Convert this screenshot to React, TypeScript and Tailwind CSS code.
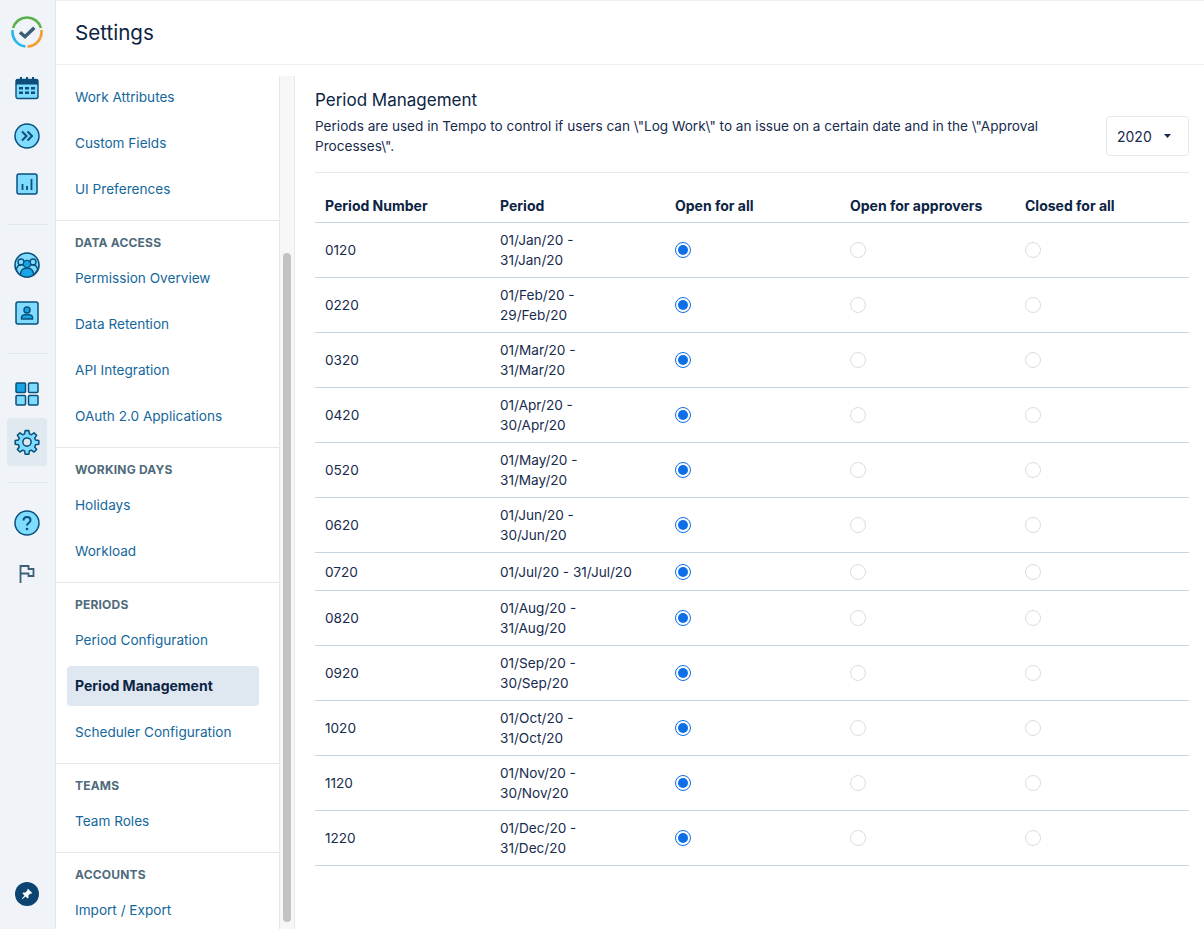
import React from "react";

const Logo = () => (
  <svg width="32" height="32" viewBox="0 0 32 32" fill="none">
    <path d="M2.06 12A14.5 14.5 0 0 1 29.94 12" stroke="#5cb04a" strokeWidth="2.6" />
    <path d="M1.64 14A14.5 14.5 0 0 0 14.5 30.42" stroke="#29b6e8" strokeWidth="2.6" />
    <path d="M16.5 30.49A14.500 14.500 0 0 0 30.36 14" stroke="#f59a2f" strokeWidth="2.6" />
    <path d="M9 16.3l5 4.400 9.300-9" stroke="#3d5d75" strokeWidth="3.5" />
  </svg>
);

const S = "#0b4f7a";
const F = "#7fdcff";

const Calendar = () => (
  <svg width="24" height="24" viewBox="0 0 24 24">
    <rect x="1" y="3.5" width="22" height="19" rx="2" fill={F} stroke={S} strokeWidth="1.4" />
    <path d="M1 3.5h22v5H1z" fill={S} />
    <path d="M6 1v4M12 1v4M18 1v4" stroke={S} strokeWidth="2" />
    <path d="M4 11h4v2.5H4zM10 11h4v2.5h-4zM16 11h4v2.5h-4zM4 15.5h4V18H4zM10 15.5h4V18h-4zM16 15.5h4V18h-4z" fill={S} />
  </svg>
);
const Forward = () => (
  <svg width="26" height="26" viewBox="0 0 26 26" fill="none">
    <circle cx="13" cy="13" r="12" fill={F} stroke={S} strokeWidth="1.5" />
    <path d="M8 8.500l4.500 4.500L8 17.500M13.500 8.500L18 13l-4.500 4.500" stroke={S} strokeWidth="2" />
  </svg>
);
const Chart = () => (
  <svg width="22" height="22" viewBox="0 0 22 22" fill="none">
    <rect x="1" y="1" width="20" height="20" rx="2" fill={F} stroke={S} strokeWidth="1.5" />
    <path d="M6.500 11v6M11 13v4M15.500 6v11" stroke={S} strokeWidth="1.800" />
  </svg>
);
const Team = () => (
  <svg width="26" height="26" viewBox="0 0 26 26">
    <circle cx="13" cy="13" r="12" fill={F} stroke={S} strokeWidth="1.600" />
    <circle cx="7" cy="10" r="3" fill="none" stroke={S} strokeWidth="1.400" />
    <circle cx="19" cy="10" r="3" fill="none" stroke={S} strokeWidth="1.400" />
    <path d="M2.500 18c0-3.500 2-5 5-5h11c3 0 5 1.500 5 5l-3 4H5z" fill={F} stroke={S} strokeWidth="1.300" />
    <circle cx="13" cy="12" r="3.600" fill="#16a5e6" stroke={S} strokeWidth="1.300" />
    <path d="M6.500 23c0-5 2.500-7 6.500-7s6.500 2 6.500 7a12 12 0 0 1-13 0z" fill="#16a5e6" stroke={S} strokeWidth="1.300" />
  </svg>
);
const Person = () => (
  <svg width="24" height="24" viewBox="0 0 24 24">
    <rect x="1" y="1" width="22" height="22" rx="2" fill={F} stroke={S} strokeWidth="1.500" />
    <circle cx="12" cy="9" r="3" fill="#16a5e6" stroke={S} strokeWidth="1.500" />
    <path d="M6.500 18v-1.500c0-2 2-3 5.500-3s5.500 1 5.500 3V18z" fill="#16a5e6" stroke={S} strokeWidth="1.500" />
  </svg>
);
const Grid = () => (
  <svg width="24" height="24" viewBox="0 0 24 24" stroke={S} strokeWidth="1.500">
    <rect x="1" y="1" width="9.500" height="9.500" rx="1" fill="#16a5e6" />
    <rect x="13.500" y="1" width="9.500" height="9.500" rx="1" fill={F} />
    <rect x="1" y="13.500" width="9.500" height="9.500" rx="1" fill={F} />
    <rect x="13.500" y="13.500" width="9.500" height="9.500" rx="1" fill={F} />
  </svg>
);
const Gear = () => (
  <svg width="26" height="26" viewBox="0 0 24 24" fill={F} stroke={S} strokeWidth="1.400" strokeLinejoin="round">
    <path d="M10.300 1.500h3.400l.5 3 1.800.8 2.500-1.800 2.400 2.400-1.800 2.500.8 1.800 3 .5v3.400l-3 .5-.8 1.800 1.800 2.500-2.400 2.400-2.500-1.800-1.800.8-.5 3h-3.400l-.5-3-1.800-.8-2.500 1.800-2.400-2.400 1.800-2.500-.8-1.800-3-.5v-3.400l3-.5.8-1.800-1.800-2.500 2.400-2.400 2.500 1.800 1.800-.8z" />
    <circle cx="12" cy="12" r="3.800" fill="#e1e9f0" />
  </svg>
);
const Help = () => (
  <svg width="26" height="26" viewBox="0 0 26 26" fill="none">
    <circle cx="13" cy="13" r="12" fill={F} stroke={S} strokeWidth="1.500" />
    <path d="M9.500 10.500c0-2.300 1.500-3.500 3.500-3.500s3.500 1.200 3.500 3.200c0 2.800-3.500 2.800-3.500 5.300" stroke={S} strokeWidth="2" />
    <circle cx="13" cy="19" r="1.300" fill={S} />
  </svg>
);
const Flag = () => (
  <svg width="16" height="18" viewBox="0 0 16 18" fill="none" stroke="#3d6076" strokeWidth="1.800">
    <path d="M1.500 18V1h8v3h5v7h-5V8.500H1.500" />
  </svg>
);
const Pin = () => (
  <div className="flex h-6 w-6 items-center justify-center rounded-full bg-[#0b4470]">
    <svg width="12" height="12" viewBox="0 0 12 12" fill="#fff">
      <path d="M7 .8l4.200 4.200-1 .8-.8-.2-2 2 .2 2-1 .9-2-2L1.200 11.200.8 10.800l2.700-3.400-2-2 .9-1 2 .2 2-2-.2-.8z" />
    </svg>
  </div>
);

const Rule = () => <div className="mx-[7px] h-px bg-[#dfe6ee]" />;

const Rail = () => (
  <div className="flex w-[56px] shrink-0 flex-col border-r border-[#e1e7ee] bg-[#f0f4f8] pr-[1px]">
    <div className="flex h-[64px] items-center justify-center"><Logo /></div>
    <div className="flex h-[48px] items-center justify-center"><Calendar /></div>
    <div className="flex h-[48px] items-center justify-center"><Forward /></div>
    <div className="mb-[16px] flex h-[48px] items-center justify-center"><Chart /></div>
    <Rule />
    <div className="mt-[16px] flex h-[48px] items-center justify-center"><Team /></div>
    <div className="mb-[16px] flex h-[48px] items-center justify-center"><Person /></div>
    <Rule />
    <div className="mt-[16px] flex h-[48px] items-center justify-center"><Grid /></div>
    <div className="mx-[7px] flex h-[48px] items-center justify-center rounded bg-[#e1e9f0]"><Gear /></div>
    <div className="mt-[16px]"><Rule /></div>
    <div className="mt-[16px] flex h-[48px] items-center justify-center"><Help /></div>
    <div className="flex h-[48px] items-center justify-center pt-[6px]"><Flag /></div>
    <div className="mt-auto flex h-[48px] items-start justify-center pt-px"><Pin /></div>
  </div>
);

const groups: { title?: string; items: string[] }[] = [
  { items: ["Work Attributes", "Custom Fields", "UI Preferences"] },
  { title: "DATA ACCESS", items: ["Permission Overview", "Data Retention", "API Integration", "OAuth 2.0 Applications"] },
  { title: "WORKING DAYS", items: ["Holidays", "Workload"] },
  { title: "PERIODS", items: ["Period Configuration", "Period Management", "Scheduler Configuration"] },
  { title: "TEAMS", items: ["Team Roles"] },
  { title: "ACCOUNTS", items: ["Import / Export"] },
];

const Nav = () => (
  <div className="h-full w-[223px] shrink-0 overflow-hidden pt-[12px]">
    {groups.map((g, i) => (
      <div key={i} className={i === groups.length - 1 ? "" : "border-b border-[#e3e8ed] pb-[5px]"}>
        {g.title && (
          <div className="h-[37px] pl-[19px] pt-[14px] text-[12px] font-bold leading-[16px] tracking-[0.2px] text-[#4f6b7c]">
            {g.title}
          </div>
        )}
        {g.items.map((it) =>
          it === "Period Management" ? (
            <div key={it} className="mx-[11px] mb-[6px] flex h-[40px] w-[192px] items-center rounded bg-[#dfe8f0] pb-[2px] pl-[8px] text-[14px] font-bold text-[#0c2444]">
              {it}
            </div>
          ) : (
            <div key={it} className="mb-[6px] flex h-[40px] items-center pl-[19px] text-[13.6px] text-[#15679b]">
              {it}
            </div>
          ),
        )}
      </div>
    ))}
  </div>
);

const Scroll = () => (
  <div className="flex h-full w-[16px] shrink-0 justify-center border-x border-[#e6e9ec] bg-[#f7f7f7] pt-[177px]">
    <div className="h-[669px] w-[8px] rounded-full bg-[#c2c2c2]" />
  </div>
);

const rows = [
  ["0120", "01/Jan/20 - 31/Jan/20"],
  ["0220", "01/Feb/20 - 29/Feb/20"],
  ["0320", "01/Mar/20 - 31/Mar/20"],
  ["0420", "01/Apr/20 - 30/Apr/20"],
  ["0520", "01/May/20 - 31/May/20"],
  ["0620", "01/Jun/20 - 30/Jun/20"],
  ["0720", "01/Jul/20 - 31/Jul/20"],
  ["0820", "01/Aug/20 - 31/Aug/20"],
  ["0920", "01/Sep/20 - 30/Sep/20"],
  ["1020", "01/Oct/20 - 31/Oct/20"],
  ["1120", "01/Nov/20 - 30/Nov/20"],
  ["1220", "01/Dec/20 - 31/Dec/20"],
];

const RadioOn = () => (
  <div className="flex h-4 w-4 items-center justify-center rounded-full border border-[#0d6fe8] bg-white">
    <div className="h-[10px] w-[10px] rounded-full bg-[#0d6fe8]" />
  </div>
);
const RadioOff = () => <div className="h-4 w-4 rounded-full border border-[#d9dde1] bg-white" />;

const cols = "grid grid-cols-[175px_175px_175px_175px_1fr] items-center";

const Main = () => (
  <div className="min-w-0 flex-1 overflow-hidden pl-[20px] pr-[15px]">
    <div className="flex h-[108px] items-start border-b border-[#e3e8ed] pt-[24px]">
      <div className="min-w-0 flex-1">
        <h2 className="text-[17px] leading-[22px] text-[#0c2444]">Period Management</h2>
        <p className="mt-[5px] w-[760px] text-[13.6px] leading-[20px] text-[#172b4d]">
          Periods are used in Tempo to control if users can \"Log Work\" to an issue on a certain date and in the \"Approval Processes\".
        </p>
      </div>
      <div className="mt-[27px] flex h-[40px] w-[83px] items-center rounded border border-[#e3e8ed] bg-white pl-[10px] text-[14px] text-[#172b4d]">
        2020
        <svg className="ml-[12px]" width="7" height="4" viewBox="0 0 7 4" fill="#172b4d"><path d="M0 0h7L3.500 4z" /></svg>
      </div>
    </div>
    <div className={`${cols} h-[50px] border-b border-[#c5d5df] pt-[16px] text-[14px] font-bold text-[#0c2444]`}>
      {["Period Number", "Period", "Open for all", "Open for approvers", "Closed for all"].map((h) => (
        <div key={h} className="px-[10px]">{h}</div>
      ))}
    </div>
    {rows.map(([n, p]) => (
      <div key={n} className={`${cols} min-h-[38px] border-b border-[#c5d5df] text-[13.6px] leading-[20px] text-[#172b4d]`}>
        <div className="px-[10px]">{n}</div>
        <div className="w-[156px] py-[7px] pl-[10px] pr-[10px]">{p}</div>
        <div className="px-[10px]"><RadioOn /></div>
        <div className="px-[10px]"><RadioOff /></div>
        <div className="px-[10px]"><RadioOff /></div>
      </div>
    ))}
  </div>
);

export default function App() {
  return (
    <div className="flex h-[929px] w-full overflow-hidden bg-white font-['Inter',sans-serif]">
      <Rail />
      <div className="flex min-w-0 flex-1 flex-col">
        <div className="flex h-[65px] shrink-0 items-center border-y border-[#edf0f3] pl-[19px] pt-[2px] text-[20.6px] text-[#0c2444]">
          Settings
        </div>
        <div className="flex min-h-0 flex-1">
          <Nav />
          <div className="flex h-full flex-col pt-[11px]"><Scroll /></div>
          <Main />
        </div>
      </div>
    </div>
  );
}
